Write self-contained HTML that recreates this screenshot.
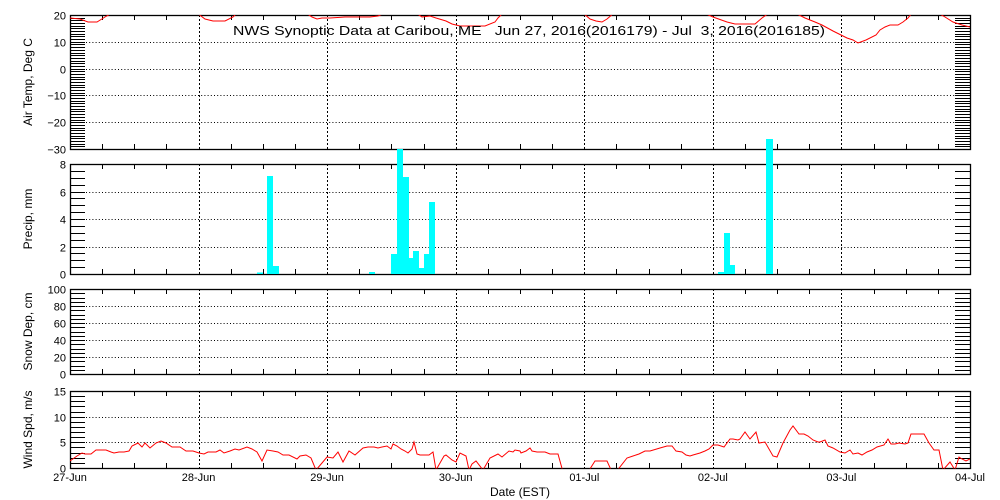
<!DOCTYPE html>
<html><head><meta charset="utf-8"><style>
html,body{margin:0;padding:0;background:#fff;}
svg{display:block;font-family:"Liberation Sans",sans-serif;}
</style></head><body>
<svg id="s" width="1000" height="500" xmlns="http://www.w3.org/2000/svg">
<defs>
<clipPath id="c1"><rect x="70" y="15" width="900" height="134"/></clipPath>
<clipPath id="c4"><rect x="70" y="391" width="900" height="77.5"/></clipPath>
</defs>
<g id="g"></g>
<g fill="#00ffff">
<rect x="257" y="272.5" width="6" height="1.5"/>
<rect x="267" y="176" width="6" height="98"/>
<rect x="273" y="266" width="6" height="8"/>
<rect x="369" y="272" width="6" height="2"/>
<rect x="391" y="254" width="6" height="20"/>
<rect x="397" y="149" width="6" height="125"/>
<rect x="403" y="177" width="6" height="97"/>
<rect x="409" y="258" width="4" height="16"/>
<rect x="413" y="251" width="6" height="23"/>
<rect x="419" y="268" width="5" height="6"/>
<rect x="424" y="254" width="5" height="20"/>
<rect x="429" y="202" width="6" height="72"/>
<rect x="718" y="272" width="6" height="2"/>
<rect x="724" y="233" width="6" height="41"/>
<rect x="730" y="265" width="5" height="9"/>
<rect x="766" y="139" width="7" height="135"/>
</g>
<g clip-path="url(#c1)" fill="none" stroke="#f00" stroke-width="1">
<polyline points="70,18 80,19 88,22 97,22 105,17 112,13"/>
<polyline points="197,13 205,19 213,21 225,21 233,17 237,13"/>
<polyline points="306,13 312,17 317,19 322,18 330,18 345,17 370,17 378,16 385,13"/>
<polyline points="416,13 422,17 430,16 436,18 446,21 452,24 460,26 485,26 495,22 498,18 503,13"/>
<polyline points="583,13 590,19 596,21 602,22 607,19 614,13"/>
<polyline points="704,13 713,17 727,22 735,24 755,24 762,18 769,13"/>
<polyline points="795,13 805,18 815,22 822,25 833,31 847,38 853,40 858,43 866,40 876,35 880,30 885,27 890,25 898,25 903,22 908,18 912,13"/>
<polyline points="938,13 945,17 953,22 962,25 970,27"/>
</g>
<g clip-path="url(#c4)" fill="none" stroke="#f00" stroke-width="1">
<polyline points="70,461 77,456 82,453 85,454 91,454 96,450 106,450 111,452 114,453 119,452 124,452 129,451 132,446 138,443 142,447 145,443 150,448 156,443 161,441 166,443 172,447 180,447 186,451 193,451 199,453 204,454 208,452 216,452 220,450 224,453 230,451 235,449 239,450 247,447 252,449 257,452 262,461 267,450 273,451 278,452 283,455 289,455 297,459 300,456 306,455 311,458 316,470 322,463 327,457 333,458 338,452 343,462 349,451 355,455 363,448 368,447 374,447 378,448 382,447 387,446 391,449 393,444 397,446 401,449 405,451 408,453 412,449 414,442 417,454 420,455 429,455 433,452 436,470 444,456 446,455 452,460 456,462 460,453 466,456 469,470 472,464 476,461 483,470 490,458 498,454 502,457 509,451 513,452 515,450 520,451 521,453 526,451 530,448 532,451 537,452 545,452 550,454 558,454 563,472"/>
<polyline points="588,472 595,461 607,461 612,472"/>
<polyline points="616,472 627,458 633,456 639,454 645,451 650,451 660,448 667,446 672,446 676,451 682,452 686,455 690,456 693,455 700,453 705,451 709,449 713,445 718,445 724,447 730,439 733,439 738,440 740,439 745,432 750,439 756,432 759,443 765,442 773,456 777,457 783,443 790,430 793,426 799,434 804,434 808,436 813,440 818,442 820,442 825,440 828,446 833,448 840,452 845,453 850,450 853,454 858,453 862,455 867,452 872,450 877,447 884,445 888,439 891,444 895,444 899,443 905,444 908,443 911,434 924,434 929,443 934,450 939,450 943,470 950,462 955,470 959,457 962,459 966,461 970,459"/>
</g>
<text x="233" y="35" font-size="13" style="white-space:pre" textLength="592" lengthAdjust="spacingAndGlyphs">NWS Synoptic Data at Caribou, ME   Jun 27, 2016(2016179) - Jul  3, 2016(2016185)</text>
</svg>
<script>
var g=document.getElementById('g'),h='';
function L(x1,y1,x2,y2,extra){h+='<line x1="'+x1+'" y1="'+y1+'" x2="'+x2+'" y2="'+y2+'" stroke="#000" stroke-width="1" '+(extra||'')+'/>';}
function T(x,y,t,a,fs){h+='<text x="'+x+'" y="'+y+'" font-size="'+(fs||11)+'" text-anchor="'+(a||'end')+'">'+t+'</text>';}
var days=[70,198.6,327.1,455.7,584.3,712.9,841.4,970];
var P=[
 {t:15,b:149,min:-30,max:20,step:10,minor:1,lab:'Air Temp, Deg C'},
 {t:164,b:274,min:0,max:8,step:2,minor:0.5,lab:'Precip, mm'},
 {t:289,b:374,min:0,max:100,step:20,minor:5,lab:'Snow Dep, cm'},
 {t:391,b:468,min:0,max:15,step:5,minor:1,lab:'Wind Spd, m/s'}];
P.forEach(function(p){
 var Y=function(v){return p.b-(v-p.min)/(p.max-p.min)*(p.b-p.t);};
 for(var v=p.min;v<=p.max+1e-6;v+=p.minor){var y=Math.round(Y(v))+0.5;L(70,y,85,y);L(955,y,970,y);}
 for(var v=p.min;v<=p.max+1e-6;v+=p.step){var y=Math.round(Y(v))+0.5;
   if(v>p.min&&v<p.max)L(70,y,970,y,'stroke-dasharray="1,2.2"');
   T(66,y+4,(v<0?'\u2212'+(-v):v));}
 for(var i=1;i<7;i++){var x=Math.round(days[i])+0.5;L(x,p.t,x,p.b,'stroke-dasharray="2,2"');}
 for(var k=1;k<28;k++){if(k%4==0)continue;var x=Math.round(70+k*900/28)+0.5;L(x,p.t,x,p.t+5);L(x,p.b,x,p.b-5);}
 h+='<rect x="70.5" y="'+(p.t+0.5)+'" width="900" height="'+(p.b-p.t)+'" fill="none" stroke="#000" stroke-width="1.3"/>';
 var cy=(p.t+p.b)/2;
 h+='<text x="0" y="0" font-size="12" text-anchor="middle" transform="translate(32,'+cy+') rotate(-90)">'+p.lab+'</text>';
});
var dl=['27-Jun','28-Jun','29-Jun','30-Jun','01-Jul','02-Jul','03-Jul','04-Jul'];
dl.forEach(function(d,i){T(days[i],481,d,'middle');});
T(520,496,'Date (EST)','middle',12);
g.innerHTML=h;
</script>
</body></html>
